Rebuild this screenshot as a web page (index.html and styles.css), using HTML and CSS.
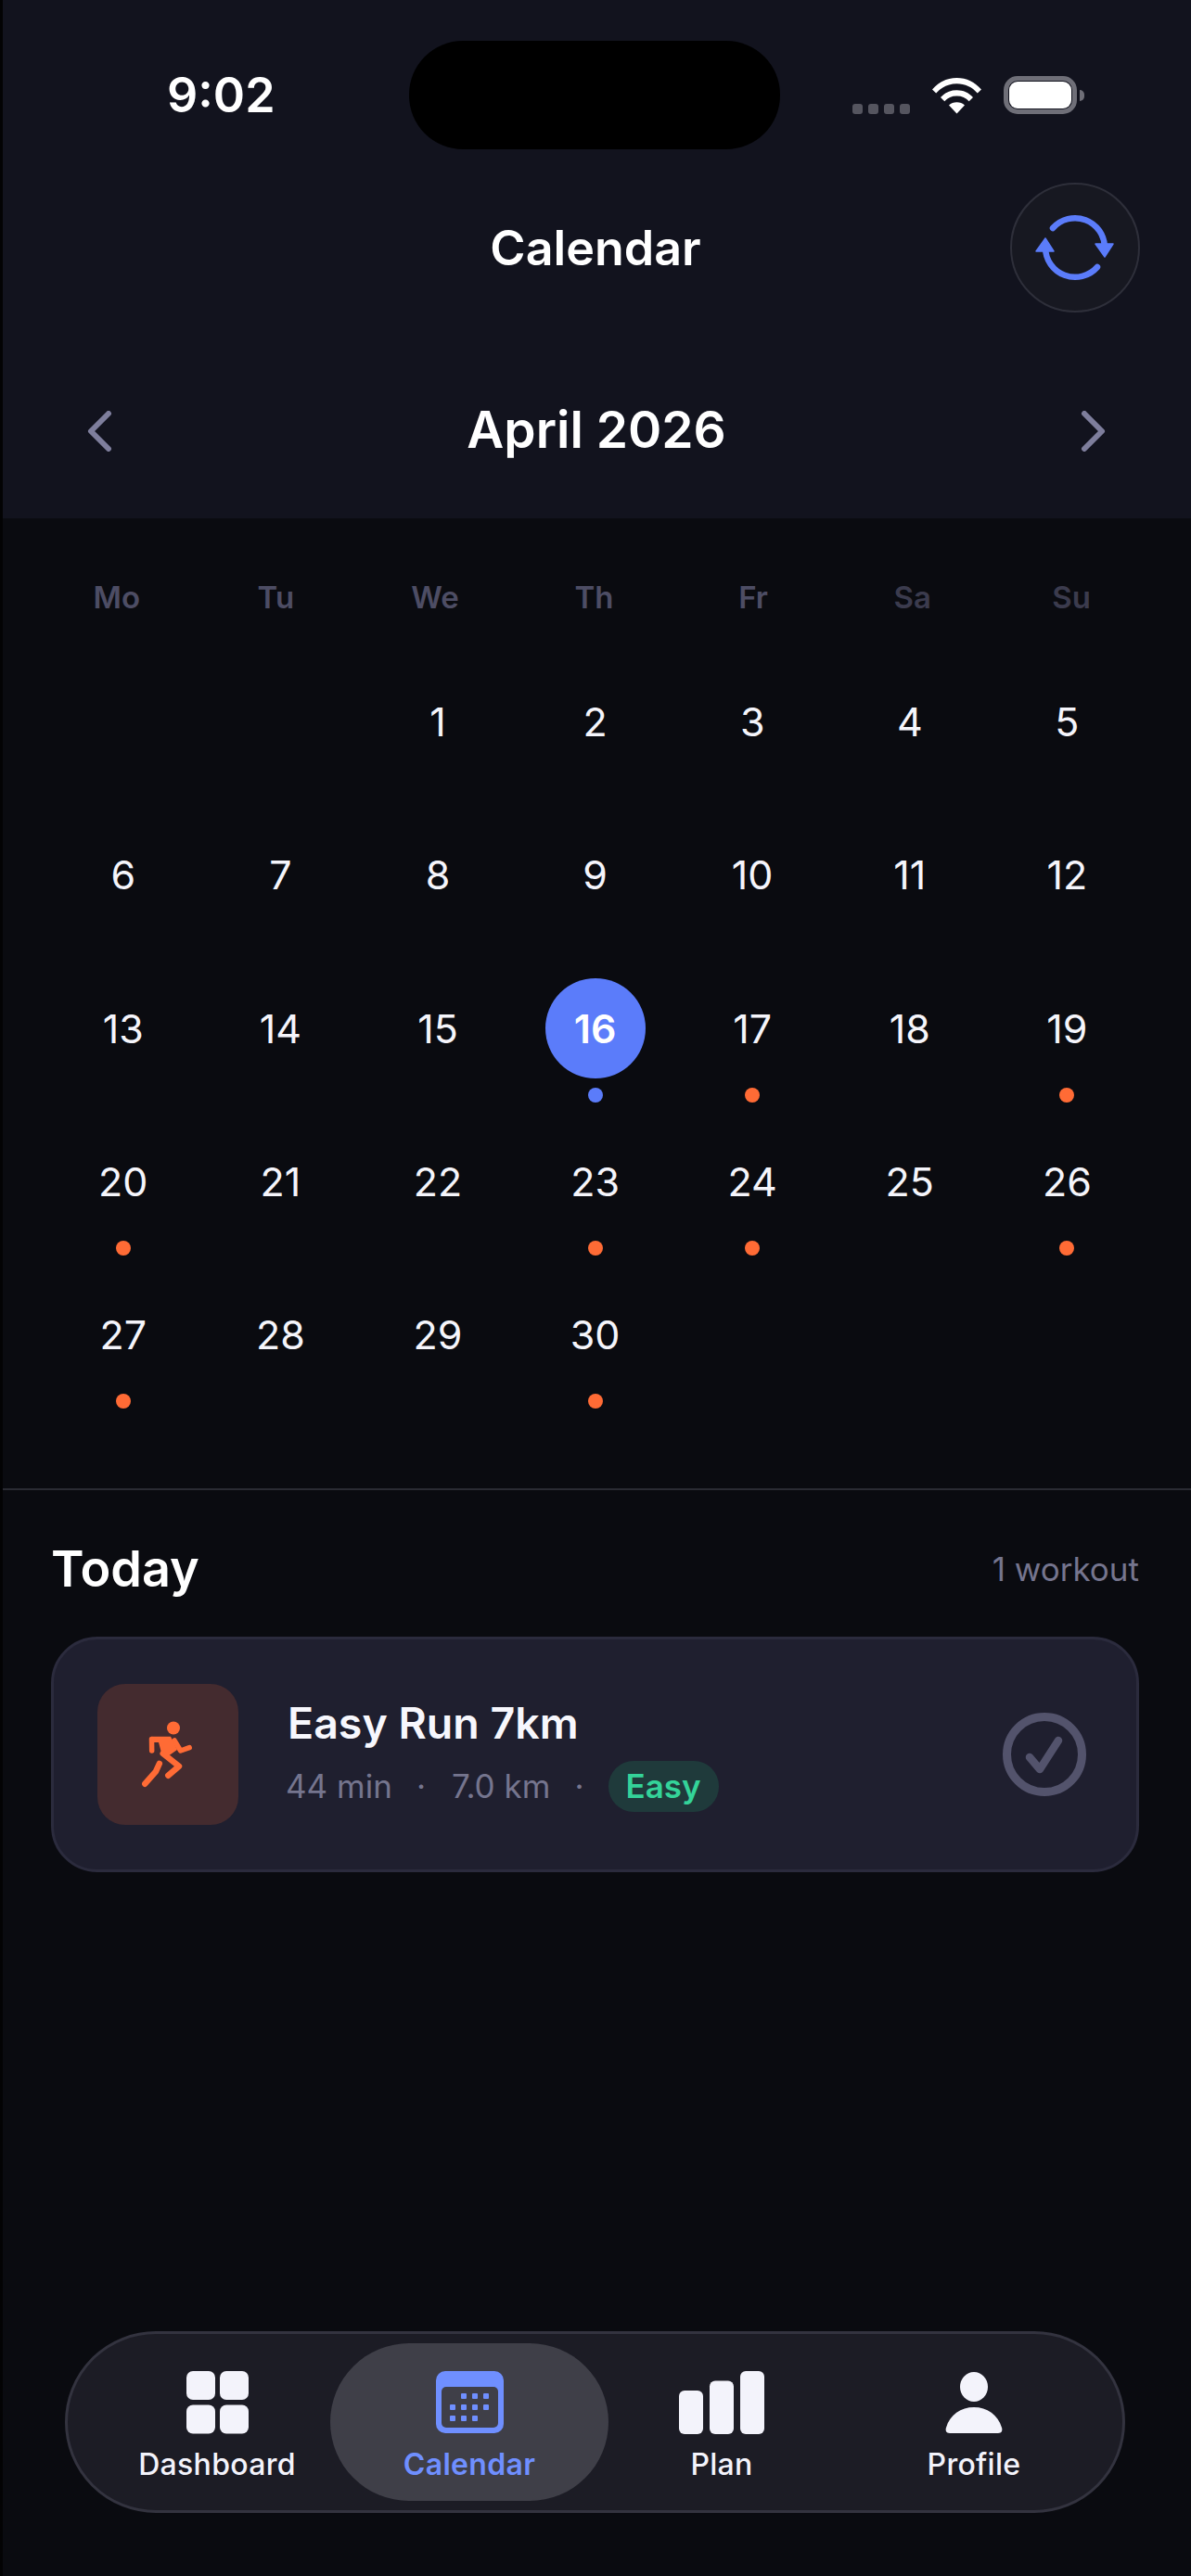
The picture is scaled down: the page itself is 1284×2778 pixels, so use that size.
FILE: index.html
```html
<!DOCTYPE html>
<html lang="en">
<head>
<meta charset="utf-8">
<title>Calendar</title>
<link rel="stylesheet" href="styles.css">
</head>
<body>
<div class="app">
  <header class="top">
    <div class="status">
      <span class="time">9:02</span>
      <div class="island"></div>
      <div class="status-icons">
        <div class="signal"><i></i><i></i><i></i><i></i></div>
        <svg class="wifi" width="53" height="40" viewBox="0 0 53 40"><path fill="#fff" d="M0 13.5C7 5.5 16 1 26.5 1S46 5.500 53 13.500L48.800 17.500C43 11 35.500 7.300 26.500 7.300S10 11 4.200 17.500Z"/><path fill="#fff" d="M9 22C13.500 17 19.500 14.300 26.500 14.300S39.500 17 44 22L39.700 26.200C36.300 22.500 32 20.500 26.500 20.500S16.700 22.500 13.300 26.200Z"/><path fill="#fff" d="M18 30.500C20.300 28.300 23.200 27.200 26.500 27.200S32.700 28.300 35 30.500L26.500 39.500Z"/></svg>
        <div class="battery"><div class="battery-fill"></div><div class="battery-cap"></div></div>
      </div>
    </div>
    <div class="title-row">
      <h1 class="title">Calendar</h1>
      <button class="sync" aria-label="Sync">
        <svg width="90" height="80" viewBox="0 0 90 80" fill="none"><path d="M21 19A32 32 0 0 1 77 40" stroke="#5b7cfa" stroke-width="6.500" stroke-linecap="round"/><path d="M69 61A32 32 0 0 1 13 40" stroke="#5b7cfa" stroke-width="6.500" stroke-linecap="round"/><path d="M67 36L86 36L77 50Z" fill="#5b7cfa" stroke="#5b7cfa" stroke-width="1.500" stroke-linejoin="round"/><path d="M3 44L22 44L13 30Z" fill="#5b7cfa" stroke="#5b7cfa" stroke-width="1.500" stroke-linejoin="round"/></svg>
      </button>
    </div>
    <div class="month-row">
      <svg class="chev" width="27" height="44" viewBox="0 0 27 44" fill="none"><path d="M23 3L4 22L23 41" stroke="#7e7e9c" stroke-width="6" stroke-linecap="round" stroke-linejoin="round"/></svg>
      <h2 class="month">April 2026</h2>
      <svg class="chev" width="27" height="44" viewBox="0 0 27 44" fill="none"><path d="M4 3L23 22L4 41" stroke="#7e7e9c" stroke-width="6" stroke-linecap="round" stroke-linejoin="round"/></svg>
    </div>
  </header>

  <section class="cal">
    <div class="weekdays">
      <span>Mo</span><span>Tu</span><span>We</span><span>Th</span><span>Fr</span><span class="wknd">Sa</span><span class="wknd">Su</span>
    </div>
    <div class="days">
      <div class="day"></div><div class="day"></div>
      <div class="day"><b>1</b></div><div class="day"><b>2</b></div><div class="day"><b>3</b></div><div class="day"><b>4</b></div><div class="day"><b>5</b></div>
      <div class="day"><b>6</b></div><div class="day"><b>7</b></div><div class="day"><b>8</b></div><div class="day"><b>9</b></div><div class="day"><b>10</b></div><div class="day"><b>11</b></div><div class="day"><b>12</b></div>
      <div class="day"><b>13</b></div><div class="day"><b>14</b></div><div class="day"><b>15</b></div><div class="day today"><b>16</b><i class="dot blue"></i></div><div class="day"><b>17</b><i class="dot"></i></div><div class="day"><b>18</b></div><div class="day"><b>19</b><i class="dot"></i></div>
      <div class="day"><b>20</b><i class="dot"></i></div><div class="day"><b>21</b></div><div class="day"><b>22</b></div><div class="day"><b>23</b><i class="dot"></i></div><div class="day"><b>24</b><i class="dot"></i></div><div class="day"><b>25</b></div><div class="day"><b>26</b><i class="dot"></i></div>
      <div class="day"><b>27</b><i class="dot"></i></div><div class="day"><b>28</b></div><div class="day"><b>29</b></div><div class="day"><b>30</b><i class="dot"></i></div>
    </div>
  </section>

  <section class="today-sec">
    <div class="today-head">
      <h3 class="today-title">Today</h3>
      <span class="count">1 workout</span>
    </div>
    <article class="card">
      <div class="tile">
        <svg width="56" height="72" viewBox="0 0 56 72" fill="none"><circle cx="34" cy="7.500" r="7" fill="#ff6b35"/><path d="M10.500 19.500L10.700 32" stroke="#ff6b35" stroke-width="5.500" stroke-linecap="round"/><path d="M35 21L41.700 32L51.200 28.700" stroke="#ff6b35" stroke-width="5.500" stroke-linecap="round" stroke-linejoin="round"/><path d="M10.500 16.700H31L38 31L28 38L22 38L18 23H10.500Z" fill="#ff6b35"/><path d="M22.700 35L40 48.700L28.300 58.700" stroke="#ff6b35" stroke-width="6.500" stroke-linecap="round" stroke-linejoin="round"/><path d="M18.800 46L15 54.300L3.300 67.700" stroke="#ff6b35" stroke-width="6.500" stroke-linecap="round" stroke-linejoin="round"/></svg>
      </div>
      <div class="card-body">
        <div class="card-title">Easy Run 7km</div>
        <div class="meta"><span>44 min</span><span class="sep first">·</span><span>7.0 km</span><span class="sep">·</span><span class="pill">Easy</span></div>
      </div>
      <svg class="check" width="90" height="90" viewBox="0 0 90 90" fill="none"><circle cx="45" cy="45" r="40.500" stroke="#53536c" stroke-width="9"/><path d="M29 48L40 61L60 30" stroke="#53536c" stroke-width="8.500" stroke-linecap="round" stroke-linejoin="round"/></svg>
    </article>
  </section>

  <nav class="tabbar">
    <div class="tab">
      <svg width="67" height="68" viewBox="0 0 67 68"><g fill="#f3f3fb"><rect width="31" height="31" rx="7"/><rect x="36" width="31" height="31" rx="7"/><rect y="36.500" width="31" height="31" rx="7"/><rect x="36" y="36.500" width="31" height="31" rx="7"/></g></svg>
      <span>Dashboard</span>
    </div>
    <div class="tab active">
      <svg width="73" height="68" viewBox="0 0 73 68"><rect width="73" height="67" rx="10" fill="#6f8fff"/><rect x="6" y="17" width="61" height="44" rx="5" fill="#3f3f48"/><g fill="#6f8fff"><rect x="27" y="24" width="6" height="6" rx="1"/><rect x="39" y="24" width="6" height="6" rx="1"/><rect x="51" y="24" width="6" height="6" rx="1"/><rect x="15" y="36" width="6" height="6" rx="1"/><rect x="27" y="36" width="6" height="6" rx="1"/><rect x="39" y="36" width="6" height="6" rx="1"/><rect x="51" y="36" width="6" height="6" rx="1"/><rect x="15" y="48" width="6" height="6" rx="1"/><rect x="27" y="48" width="6" height="6" rx="1"/><rect x="39" y="48" width="6" height="6" rx="1"/></g></svg>
      <span>Calendar</span>
    </div>
    <div class="tab">
      <svg width="92" height="68" viewBox="0 0 92 68"><g fill="#f3f3fb"><rect y="21" width="26" height="47" rx="6"/><rect x="33" y="10.500" width="26" height="57.500" rx="6"/><rect x="66" width="26" height="68" rx="6"/></g></svg>
      <span>Plan</span>
    </div>
    <div class="tab">
      <svg width="62" height="68" viewBox="0 0 62 68"><g fill="#f3f3fb"><ellipse cx="31" cy="17" rx="15" ry="16"/><path d="M5 67C1 67 0 64 1 61C5 47 17 39 31 39S57 47 61 61C62 64 61 67 57 67Z"/></g></svg>
      <span>Profile</span>
    </div>
  </nav>
</div>
</body>
</html>
```
FILE: styles.css
```css
* { box-sizing: border-box; margin: 0; padding: 0; }
html, body { width: 1284px; height: 2778px; background: #0a0b10; overflow: hidden; }
body { font-family: Inter, "Liberation Sans", sans-serif; color: #f5f5fb; }
.app { width: 1284px; height: 2778px; display: flex; flex-direction: column; border-left: 3px solid #030304; }

.top { height: 559px; background: #12131e; display: flex; flex-direction: column; flex: none; }
.status { height: 197px; flex: none; position: relative; }
.time { position: absolute; left: 177px; top: 70px; font-size: 52px; line-height: 66px; font-weight: 600; color: #fff; }
.island { position: absolute; left: 438px; top: 44px; width: 400px; height: 117px; border-radius: 58px; background: #000; }
.status-icons { position: absolute; left: 916px; top: 82px; display: flex; align-items: flex-start; }
.signal { display: flex; gap: 6px; margin-top: 30px; }
.signal i { width: 11px; height: 11px; border-radius: 3px; background: #55555f; display: block; }
.wifi { margin-left: 24px; margin-top: 1px; }
.battery { position: relative; width: 79px; height: 41px; margin-left: 24px; border: 5px solid #6f6f78; border-radius: 15px; background: #12131e; padding: 1px; }
.battery-fill { width: 100%; height: 100%; background: #fff; border-radius: 9px; }
.battery-cap { position: absolute; left: 77px; top: 10px; width: 5px; height: 12px; border-radius: 0 6px 6px 0; background: #6f6f78; }

.title-row { height: 140px; flex: none; position: relative; display: flex; align-items: center; justify-content: center; }
.title { font-size: 52px; font-weight: 600; line-height: 60px; color: #fff; margin-left: -3px; margin-top: 2px; }
.sync { position: absolute; left: 1086px; top: 0; width: 140px; height: 140px; border-radius: 50%; background: #171821; border: 2px solid #2e2f3a; display: flex; align-items: center; justify-content: center; }

.month-row { height: 122px; flex: none; margin-top: 66px; padding: 0 92px 0 91px; display: flex; align-items: center; justify-content: space-between; }
.month { font-size: 55px; line-height: 66px; font-weight: 600; color: #fff; margin-top: -2px; }
.chev { display: block; margin-top: 2px; }

.cal { height: 1048px; flex: none; padding: 0 43px 0 37px; border-bottom: 2px solid #2a2b33; }
.weekdays { display: grid; grid-template-columns: repeat(7, 1fr); height: 165px; padding-top: 65px; }
.weekdays span { text-align: center; font-size: 33px; line-height: 40px; font-weight: 600; color: #4d4d64; }
.weekdays .wknd { color: #3b3b4d; }
.days { display: grid; grid-template-columns: repeat(7, 169.600px); grid-auto-rows: 165.300px; margin: 0 0 0 8px; }
.day { position: relative; display: flex; justify-content: center; }
.day b { width: 108px; height: 108px; border-radius: 50%; display: flex; align-items: center; justify-content: center; font-weight: 400; font-size: 43px; color: #f5f5fb; }
.today b { background: #5b7cfa; font-weight: 600; color: #fff; }
.dot { position: absolute; left: 50%; top: 118px; width: 16px; height: 16px; margin-left: -8px; border-radius: 50%; background: #ff6b35; display: block; }
.dot.blue { background: #5b7cfa; }

.today-sec { padding: 0 56px 0 52px; flex: 1; }
.today-head { display: flex; justify-content: space-between; align-items: center; height: 158px; padding-top: 12px; }
.today-title { font-size: 54px; font-weight: 600; line-height: 66px; color: #fff; }
.count { font-size: 35px; color: #75758e; line-height: 42px; }
.card { height: 254px; border-radius: 50px; background: #1f1f2f; border: 3px solid #2b2b3d; padding: 48px 54px 48px 47px; display: flex; align-items: center; }
.tile { width: 152px; height: 152px; border-radius: 30px; background: #442b2f; display: flex; align-items: center; justify-content: center; flex: none; }
.card-body { margin-left: 53px; flex: 1; }
.card-title { font-size: 46.500px; line-height: 58px; font-weight: 600; color: #f7f7fd; margin-top: -2px; }
.meta { display: flex; align-items: center; font-size: 35px; color: #75758e; margin: 12px 0 0 -2px; height: 55px; }
.sep { margin: 0 26px; }
.sep.first { margin-right: 28px; }
.pill { background: #1f3a3b; color: #34d399; font-weight: 600; padding: 0 19px; height: 55px; border-radius: 27px; display: flex; align-items: center; }
.check { flex: none; }

.tabbar { position: absolute; left: 70px; top: 2514px; width: 1143px; height: 196px; border-radius: 98px; background: #1c1c25; border: 3px solid #33333f; display: grid; grid-template-columns: repeat(4, 272px); padding: 10px 0 10px 25px; }
.tab { display: flex; flex-direction: column; align-items: center; padding-top: 30px; border-radius: 85px; font-size: 32px; font-weight: 500; letter-spacing: 0.3px; color: #f3f3fb; gap: 14px; }
.tab svg { display: block; }
.tab span { line-height: 38px; white-space: nowrap; }
.tab.active { background: #3f3f48; color: #6f8fff; font-weight: 600; margin: 0 -14px; }
```
